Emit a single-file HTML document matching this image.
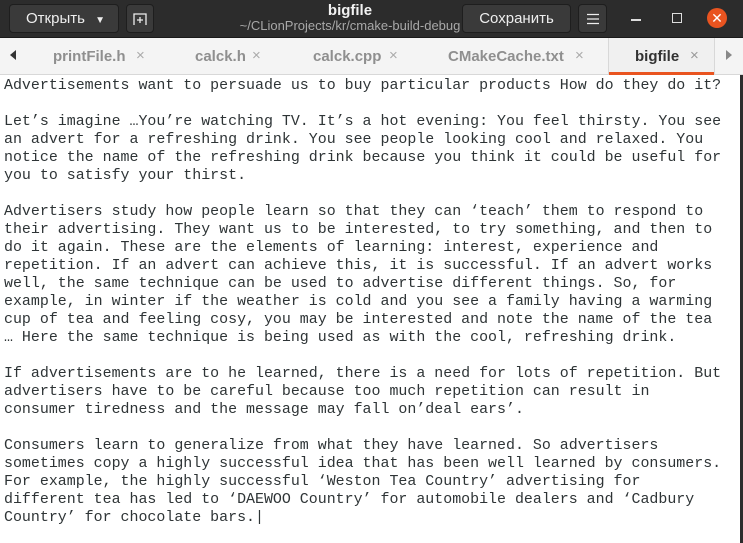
<!DOCTYPE html>
<html><head><meta charset="utf-8"><style>
*{margin:0;padding:0;box-sizing:border-box}
body{width:743px;height:543px;overflow:hidden;background:#fff;font-family:"Liberation Sans","DejaVu Sans",sans-serif;position:relative}
.hdr{position:absolute;left:0;top:0;width:743px;height:38px;background:#2c2c2c;border-bottom:1px solid #1a1a1a}
.btn{position:absolute;top:4px;height:29px;background:#3a3a3a;border:1px solid #1e1e1e;border-radius:4px;color:#eee;font-size:15px;line-height:27px;text-align:center}
.title{position:absolute;left:200px;width:300px;top:2px;text-align:center;color:#f2f2f2;font-weight:bold;font-size:15px}
.sub{position:absolute;left:200px;width:300px;top:18px;text-align:center;color:#a8a8a8;font-size:13px}
.tabs{position:absolute;left:0;top:38px;width:743px;height:37px;background:#f4f4f4;border-bottom:1px solid #d8d8d8}
.tab{position:absolute;top:10px;color:#8f8f8f;font-weight:bold;font-size:15px}
.x{position:absolute;top:9px;color:#aaa;font-size:15px}
.act{position:absolute;left:608px;top:38px;width:107px;height:37px;background:#f0f0f0;border-left:1px solid #d8d8d8;border-right:1px solid #d8d8d8}
.ul{position:absolute;left:609px;top:72px;width:105px;height:3px;background:#e95420}
pre{position:absolute;left:4px;top:77px;font-family:"Liberation Mono","DejaVu Sans Mono",monospace;font-size:14.95px;line-height:18px;color:#2e3436}
.edge{position:absolute;right:0;top:75px;width:3px;height:468px;background:#2c2c2c}
</style></head><body>
<div class="hdr">
<div class="btn" style="left:9px;width:110px;text-align:left;padding-left:16px">Открыть <span style="font-size:10px;margin-left:6px">▼</span></div>
<div class="btn" style="left:126px;width:28px">
<svg width="14" height="14" viewBox="0 0 14 14" style="margin-top:7px"><path d="M1 13V2h12v11" fill="none" stroke="#eee" stroke-width="1.3"/><path d="M7 5v6M4 8h6" stroke="#eee" stroke-width="1.3"/></svg></div>
<div class="title">bigfile</div>
<div class="sub">~/CLionProjects/kr/cmake-build-debug</div>
<div class="btn" style="left:462px;width:109px">Сохранить</div>
<div class="btn" style="left:578px;width:29px"><svg width="12" height="12" viewBox="0 0 12 12" style="margin-top:8px"><path d="M0 1.5h12M0 6h12M0 10.5h12" stroke="#eee" stroke-width="1.3"/></svg></div>
<div style="position:absolute;left:631px;top:19px;width:10px;height:1.5px;background:#ddd"></div>
<div style="position:absolute;left:672px;top:13px;width:10px;height:10px;border:1.5px solid #ddd"></div>
<div style="position:absolute;left:707px;top:8px;width:20px;height:20px;border-radius:50%;background:#e95420;color:#fff;font-size:14px;line-height:20px;text-align:center">✕</div>
</div>
<div class="tabs">
<div style="position:absolute;left:10px;top:12px;width:0;height:0;border-top:5px solid transparent;border-bottom:5px solid transparent;border-right:6px solid #333"></div>
<div class="tab" style="left:53px">printFile.h</div><div class="x" style="left:136px">×</div>
<div class="tab" style="left:195px">calck.h</div><div class="x" style="left:252px">×</div>
<div class="tab" style="left:313px">calck.cpp</div><div class="x" style="left:389px">×</div>
<div class="tab" style="left:448px">CMakeCache.txt</div><div class="x" style="left:575px">×</div>
<div style="position:absolute;left:726px;top:12px;width:0;height:0;border-top:5px solid transparent;border-bottom:5px solid transparent;border-left:6px solid #888"></div>
</div>
<div class="act"><div class="tab" style="left:26px;color:#333">bigfile</div><div class="x" style="left:81px;color:#999">×</div></div>
<div class="ul"></div>
<pre>Advertisements want to persuade us to buy particular products How do they do it?

Let’s imagine …You’re watching TV. It’s a hot evening: You feel thirsty. You see
an advert for a refreshing drink. You see people looking cool and relaxed. You
notice the name of the refreshing drink because you think it could be useful for
you to satisfy your thirst.

Advertisers study how people learn so that they can ‘teach’ them to respond to
their advertising. They want us to be interested, to try something, and then to
do it again. These are the elements of learning: interest, experience and
repetition. If an advert can achieve this, it is successful. If an advert works
well, the same technique can be used to advertise different things. So, for
example, in winter if the weather is cold and you see a family having a warming
cup of tea and feeling cosy, you may be interested and note the name of the tea
… Here the same technique is being used as with the cool, refreshing drink.

If advertisements are to he learned, there is a need for lots of repetition. But
advertisers have to be careful because too much repetition can result in
consumer tiredness and the message may fall on’deal ears’.

Consumers learn to generalize from what they have learned. So advertisers
sometimes copy a highly successful idea that has been well learned by consumers.
For example, the highly successful ‘Weston Tea Country’ advertising for
different tea has led to ‘DAEWOO Country’ for automobile dealers and ‘Cadbury
Country’ for chocolate bars.|</pre>
<div class="edge"></div>
</body></html>
